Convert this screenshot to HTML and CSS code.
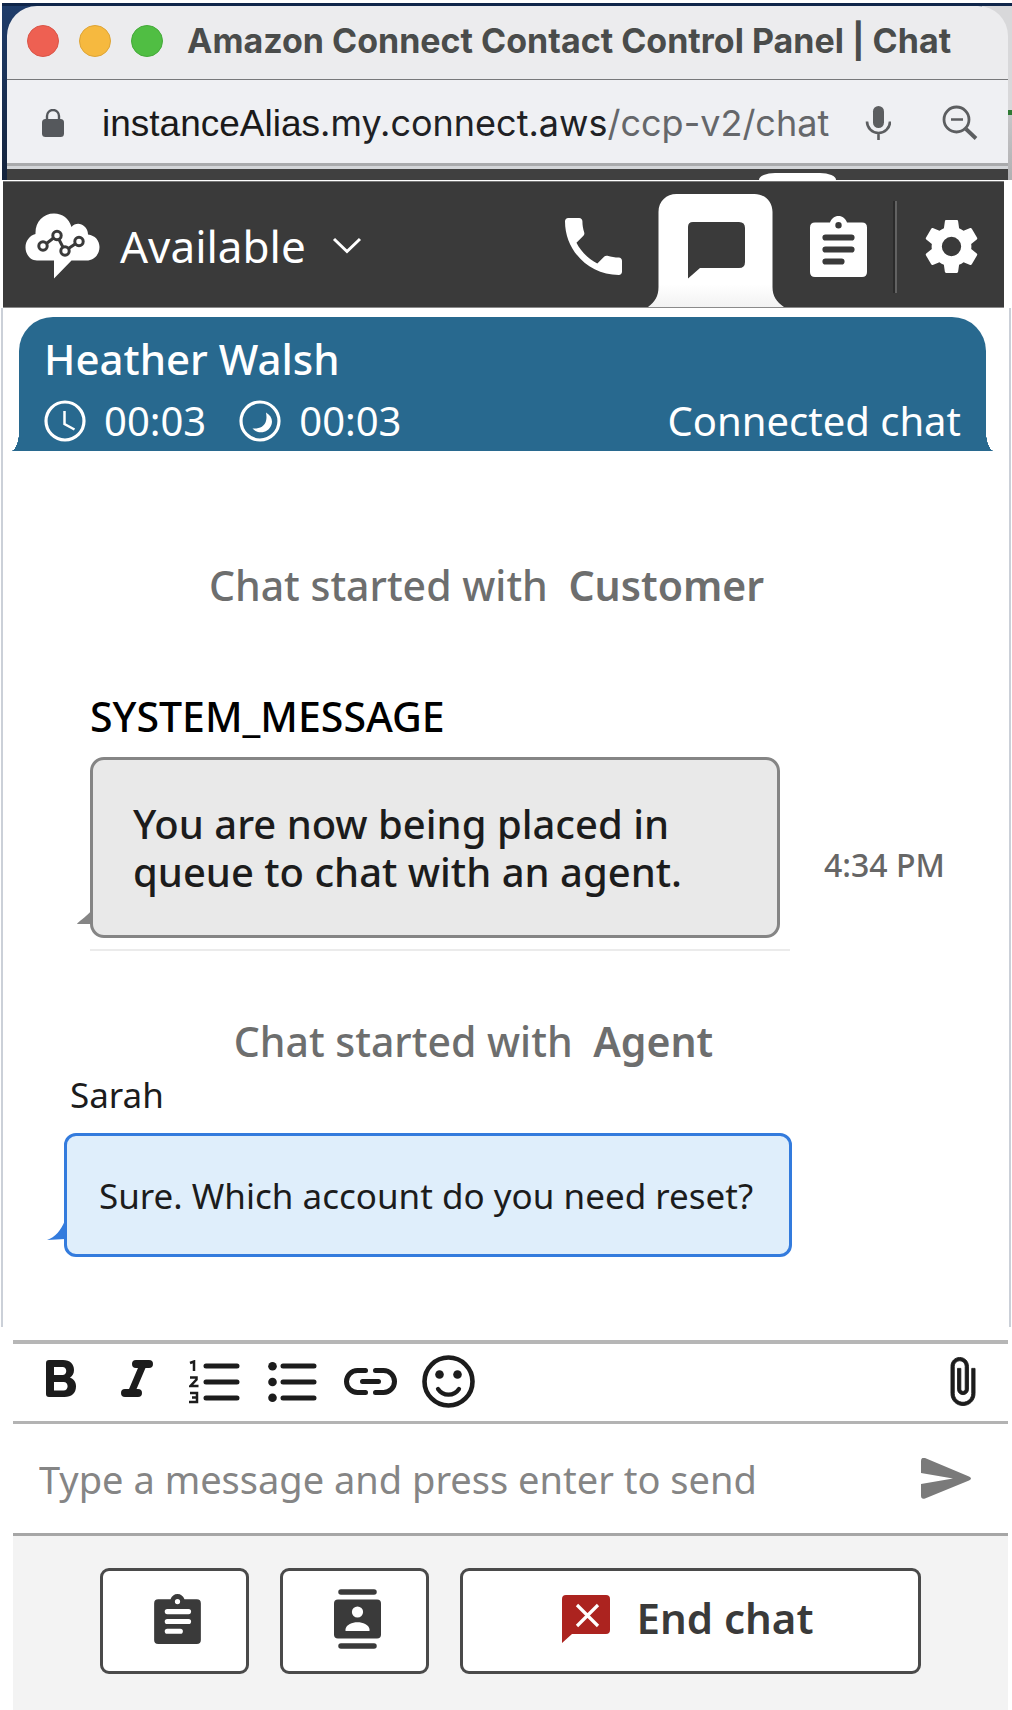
FILE: index.html
```html
<!DOCTYPE html>
<html lang="en">
<head>
<meta charset="utf-8">
<meta name="viewport" content="width=device-width, initial-scale=1">
<title>Amazon Connect Contact Control Panel | Chat</title>
<link rel="stylesheet" href="styles.css">
</head>
<body>
<div class="page">
  <div class="desktop">
    <div class="window">
      <div class="titlebar">
        <div class="lights">
          <span class="light light-close"></span>
          <span class="light light-minimize"></span>
          <span class="light light-zoom"></span>
        </div>
        <h1 class="window-title">Amazon Connect Contact Control Panel | Chat</h1>
      </div>
      <div class="addressbar">
        <svg class="lock" width="22" height="28" viewBox="0 0 22 28"><path d="M5 11V7a6 6 0 0 1 12 0v4" fill="none" stroke="#55585c" stroke-width="2.4"/><rect y="10" width="22" height="18" rx="3.5" fill="#55585c"/></svg>
        <p class="url"><span class="url-alias">instanceAlias</span><span class="url-host">.my.connect.aws</span><span class="url-path">/ccp-v2/chat</span></p>
        <button class="bare" aria-label="Microphone"><svg width="26" height="34" viewBox="0 0 26 34"><rect x="8" y="0" width="11" height="22" rx="5.5" fill="#5c5e60"/><path d="M2 15.500a11.500 11.500 0 0 0 23 0M13.500 27v7" fill="none" stroke="#5c5e60" stroke-width="2.600"/></svg></button>
        <button class="bare" aria-label="Zoom out"><svg width="36" height="36" viewBox="0 0 36 36" fill="none" stroke="#5c5e60"><circle cx="14.500" cy="14.500" r="12.500" stroke-width="2.800"/><path d="M9 14.500h12" stroke-width="2.400"/><path d="M24 24l10 9.500" stroke-width="3.800"/></svg></button>
      </div>
      <div class="behind"><span class="behind-tab"></span></div>
    </div>
  </div>

  <header class="ccp-header">
    <button class="bare status">
      <svg width="75" height="66" viewBox="0 0 75 66"><path fill="#fff" d="M12 47.500C5 47.500.500 41 .500 34.500.500 28 4.500 22.500 10.500 21 10 9 18 .500 29 .500c8.500 0 15 5 17.500 13.500C49 11 53 10 56.500 11.500c4 1.800 6.500 5.500 6.500 10 7 .8 11.500 6 11.500 12.500 0 7.500-5.500 13.500-13 13.500H46.500L29 65.500v-18z"/><g fill="none" stroke="#3a3a3a" stroke-width="3"><circle cx="18" cy="33" r="4.200"/><circle cx="32" cy="22.500" r="4.200"/><circle cx="40" cy="38" r="4.200"/><circle cx="54" cy="28.500" r="4.200"/><path d="M21.500 30.500l7-5.500M34 26.500l4 7.800M43.500 35.500l7-4.800"/></g></svg>
      <span class="status-name">Available</span>
      <svg class="chevron" width="30" height="17" viewBox="0 0 30 17"><path d="M2 2l13 12.500L28 2" fill="none" stroke="#fff" stroke-width="3"/></svg>
    </button>
    <nav class="channels" aria-label="Channels">
      <button class="bare phone" aria-label="Phone"><svg width="57" height="57" viewBox="3 3 18 18" fill="#fff"><path d="M6.620 10.790c1.440 2.830 3.760 5.140 6.590 6.590l2.200-2.200c.27-.27.67-.36 1.020-.24 1.120.37 2.330.57 3.570.57.55 0 1 .45 1 1V20c0 .55-.45 1-1 1-9.390 0-17-7.610-17-17 0-.55.45-1 1-1h3.500c.55 0 1 .45 1 1 0 1.250.2 2.450.57 3.570.11.35.03.74-.25 1.020l-2.200 2.200z"/></svg></button>
      <button class="bare chat-tab" aria-label="Chat">
        <svg width="136" height="113" viewBox="0 0 136 113"><defs><linearGradient id="fade" x1="0" y1="0" x2="0" y2="1"><stop offset=".8" stop-color="#fff"/><stop offset="1" stop-color="#f2f2f2"/></linearGradient></defs><path fill="url(#fade)" d="M0 113C7 108 10.500 102 10.500 93V18c0-11 8-18 18-18h78c10 0 18 7 18 18v75c0 9 4 15 11.500 20z"/><path fill="#3a3a3a" d="M45 28h46q6 0 6 6v34q0 6-6 6H52L40 84.500V33q0-5 5-5z"/></svg>
      </button>
      <button class="bare tasks" aria-label="Tasks"><svg width="57" height="61" viewBox="0 0 57 61"><path fill="#fff" fill-rule="evenodd" d="M5 6.500h15C21.500 2.500 24.500 0 28.500 0S35.500 2.500 37 6.500h15q5 0 5 5V56q0 5-5 5H5q-5 0-5-5V11.500q0-5 5-5zM28.500 6a3.200 3.200 0 1 0 0 6.400 3.200 3.200 0 0 0 0-6.400z"/><path d="M15.500 21.500h26M15.500 33.500h26M15.500 45.500h16" stroke="#3a3a3a" stroke-width="6.200" stroke-linecap="round"/></svg></button>
      <span class="rule"></span>
      <button class="bare gear" aria-label="Settings"><svg width="53" height="53" viewBox="2.400 2.400 19.200 19.200" fill="#fff"><path d="M19.140 12.940c.04-.3.060-.61.060-.94 0-.32-.02-.64-.07-.94l2.030-1.580c.18-.14.23-.41.12-.61l-1.920-3.320c-.12-.22-.37-.29-.59-.22l-2.390.96c-.5-.38-1.030-.7-1.620-.94l-.36-2.540c-.04-.24-.24-.41-.48-.41h-3.840c-.24 0-.43.17-.47.41l-.36 2.540c-.59.24-1.130.57-1.620.94l-2.390-.96c-.22-.08-.47 0-.59.22L2.740 8.870c-.12.21-.08.47.12.61l2.030 1.580c-.05.3-.09.63-.09.94s.02.64.07.94l-2.030 1.580c-.18.14-.23.41-.12.61l1.920 3.320c.12.22.37.29.59.22l2.390-.96c.5.38 1.030.7 1.620.94l.36 2.540c.05.24.24.41.48.41h3.840c.24 0 .44-.17.47-.41l.36-2.540c.59-.24 1.130-.56 1.620-.94l2.390.96c.22.08.47 0 .59-.22l1.920-3.320c.12-.22.07-.47-.12-.61l-2.010-1.580zM12 15.500a3.500 3.500 0 1 1 0-7 3.500 3.500 0 0 1 0 7z"/></svg></button>
    </nav>
  </header>

  <main class="conversation">
    <section class="contact">
      <h2 class="contact-name">Heather Walsh</h2>
      <div class="contact-row">
        <svg width="42" height="42" viewBox="0 0 42 42" fill="none" stroke="#fff"><circle cx="21" cy="21" r="19" stroke-width="3.200"/><path d="M20.500 11v13l10 5.500" stroke-width="2.500"/></svg>
        <time class="timer">00:03</time>
        <svg width="42" height="42" viewBox="0 0 42 42"><circle cx="21" cy="21" r="19" fill="none" stroke="#fff" stroke-width="3.200"/><path fill="#fff" d="M27 12.500c5 3 7 7.500 5.500 12C30 33 19 35 13.500 28.500c7 .5 12-2 13.500-7.500 .8-3 .5-5.500 0-8.500z"/></svg>
        <time class="timer">00:03</time>
        <span class="contact-state">Connected chat</span>
      </div>
    </section>

    <div class="thread">
      <p class="notice">Chat started with <strong>Customer</strong></p>
      <h3 class="sender">SYSTEM_MESSAGE</h3>
      <div class="message">
        <div class="bubble">
          <svg class="tail" width="14" height="14" viewBox="0 0 14 14"><path d="M14 0v13H0C1 11 9 6 14 0z" fill="#858585"/></svg>
          <p>You are now being placed in queue to chat with an agent.</p>
        </div>
        <time class="sent-at">4:34 PM</time>
      </div>
      <div class="underline"></div>
    </div>

    <div class="thread thread-agent">
      <p class="notice">Chat started with <strong>Agent</strong></p>
      <h3 class="sender">Sarah</h3>
      <div class="message">
        <div class="bubble">
          <svg class="tail" width="18" height="20" viewBox="0 0 18 20"><path d="M18 0v19L0 20C8 17 14 11 18 0z" fill="#337bdd"/></svg>
          <p>Sure. Which account do you need reset?</p>
        </div>
      </div>
    </div>
  </main>

  <form class="composer">
    <div class="toolbar">
      <button type="button" class="bare bold" aria-label="Bold"><svg width="30" height="37" viewBox="0 0 30 37"><path fill="#1c1c1c" fill-rule="evenodd" d="M3 0h14c7 0 11 4 11 10 0 3.500-1.500 6-4 7.500 4 1.500 6 5 6 9 0 6.500-4.500 10.500-11.500 10.500H3q-3 0-3-3V3q0-3 3-3zM8 7v8h8.500c5 0 5-8 0-8zM8 22v8.500h9.500c5.500 0 5.500-8.500 0-8.500z"/></svg></button>
      <button type="button" class="bare italic" aria-label="Italic"><svg width="32" height="37" viewBox="0 0 32 37" fill="none" stroke="#1c1c1c" stroke-linecap="round"><path d="M15 4h13M4 33h13" stroke-width="8"/><path d="M22 5L10.500 32" stroke-width="7"/></svg></button>
      <button type="button" class="bare numbers" aria-label="Numbered list"><svg width="51" height="44" viewBox="0 0 51 44" fill="none" stroke="#1c1c1c"><path d="M17 6h31M17 22h31M17 38h31" stroke-width="5" stroke-linecap="round"/><path d="M1 3l4-1.500V11M1 17.500h6.500v2L1.500 26h8M1 33h7v9H0M3 37.500h5" stroke-width="2.500"/></svg></button>
      <button type="button" class="bare bullets" aria-label="Bulleted list"><svg width="50" height="40" viewBox="0 0 50 40"><path d="M15 4h31M15 20h31M15 36h31" stroke="#1c1c1c" stroke-width="5" stroke-linecap="round"/><g fill="#1c1c1c"><circle cx="4.500" cy="4.300" r="4.300"/><circle cx="4.500" cy="20" r="4.300"/><circle cx="4.500" cy="35.700" r="4.300"/></g></svg></button>
      <button type="button" class="bare link" aria-label="Insert link"><svg width="53" height="27" viewBox="0 0 53 27" fill="none" stroke="#1c1c1c" stroke-width="5" stroke-linecap="round"><path d="M21.500 2.500h-8a11 11 0 0 0 0 22h8M31.500 2.500h8a11 11 0 0 1 0 22h-8M18.500 13.500h16"/></svg></button>
      <button type="button" class="bare emoji" aria-label="Emoji"><svg width="53" height="53" viewBox="0 0 53 53"><circle cx="26.500" cy="26.500" r="24" fill="none" stroke="#1c1c1c" stroke-width="4.600"/><circle cx="17.500" cy="19.500" r="4.300" fill="#1c1c1c"/><circle cx="35.500" cy="19.500" r="4.300" fill="#1c1c1c"/><path d="M16 34c5 7.500 16 7.500 21 0" fill="none" stroke="#1c1c1c" stroke-width="4.200" stroke-linecap="round"/></svg></button>
      <button type="button" class="bare attach" aria-label="Attach file"><svg width="26" height="49" viewBox="6.800 .8 11.400 22.400"><path fill="#1c1c1c" stroke="#1c1c1c" stroke-width=".4" d="M16.500 6v11.500c0 2.210-1.790 4-4 4s-4-1.790-4-4V5c0-1.380 1.120-2.500 2.500-2.500s2.500 1.120 2.500 2.500v10.500c0 .55-.45 1-1 1s-1-.45-1-1V6H10v9.500c0 1.380 1.120 2.500 2.500 2.500s2.500-1.120 2.500-2.500V5c0-2.210-1.790-4-4-4S7 2.790 7 5v12.500c0 3.040 2.460 5.500 5.500 5.500s5.500-2.460 5.500-5.500V6h-1.500z"/></svg></button>
    </div>
    <div class="entry">
      <input class="entry-text" type="text" aria-label="Message" placeholder="Type a message and press enter to send">
      <button type="button" class="bare" aria-label="Send"><svg width="51" height="41" viewBox="0 0 51 41"><path fill="#7a7a7a" d="M1 3q0-4 4-3L49 18.500q4 2 0 4L5 40.500q-4 1-4-3V26l32-5.500L1 15z"/></svg></button>
    </div>
    <div class="actions">
      <button type="button" class="action" aria-label="Create task"><svg width="47" height="50" viewBox="0 0 57 61"><path fill="#3a3a3a" fill-rule="evenodd" d="M5 6.500h15C21.500 2.500 24.500 0 28.500 0S35.500 2.500 37 6.500h15q5 0 5 5V56q0 5-5 5H5q-5 0-5-5V11.500q0-5 5-5zM28.500 6a3.200 3.200 0 1 0 0 6.400 3.200 3.200 0 0 0 0-6.400z"/><path d="M16 21.500h26M16 33.500h26M16 45.500h16" stroke="#fff" stroke-width="6.200" stroke-linecap="round"/></svg></button>
      <button type="button" class="action" aria-label="Quick connects"><svg width="47" height="60" viewBox="0 0 47 60"><path d="M7 3h33M7 57h33" stroke="#3a3a3a" stroke-width="5.500" stroke-linecap="round"/><rect y="10.500" width="47" height="39" rx="4" fill="#3a3a3a"/><circle cx="23.500" cy="23" r="5.600" fill="#fff"/><path d="M11.500 42v-2c2-9 22-9 24 0v2z" fill="#fff"/></svg></button>
      <button type="button" class="action action-end"><svg width="48" height="48" viewBox="0 0 48 48"><path fill="#ac231f" d="M4 0h40q4 0 4 4v31q0 4-4 4H10L0 48V4q0-4 4-4z"/><path d="M15 10l21 21M36 10L15 31" stroke="#fff" stroke-width="3.200"/></svg><span class="action-label">End chat</span></button>
    </div>
  </form>
</div>
</body>
</html>
```
FILE: styles.css
```css
* { box-sizing: border-box; }

body {
  margin: 0;
  background: #fff;
  color: #1c1c1c;
  font-family: "Noto Sans", "Open Sans", sans-serif;
}

h1, h2, h3, p { margin: 0; }
svg { display: block; flex: none; }

button, input { font: inherit; color: inherit; }
.bare { padding: 0; border: 0; background: none; }

.page {
  display: flex;
  flex-direction: column;
  min-height: 100vh;
  padding-top: 3px;
}

/* Browser window chrome over the desktop */
.desktop {
  margin-left: 2px;
  padding: 3px 4px 0 5px;
  background:
    linear-gradient(#10264a, #10264a) top / 100% 3px no-repeat,
    linear-gradient(#d8d8da 107px, #2f7a35 107px, #2f7a35 112px, #c6c6c8 112px, #b0b0b2) right / 30px 100% no-repeat,
    linear-gradient(#1f3d6b, #14233c);
}

.window {
  overflow: hidden;
  border-radius: 30px 30px 0 0;
  background: #ececee;
}

.titlebar {
  display: flex;
  align-items: center;
  gap: 24px;
  height: 74px;
  padding: 0 20px 3px;
  border-bottom: 1px solid #77787a;
}

.lights { display: flex; gap: 20px; }
.light { width: 32px; height: 32px; border: 1px solid; border-radius: 50%; }
.light-close { background: #ee6052; border-color: #d95548; }
.light-minimize { background: #f6b93f; border-color: #dda436; }
.light-zoom { background: #50be43; border-color: #45aa3a; }

.window-title {
  color: #4a4c4b;
  font: 700 34px/40px Inter, sans-serif;
  white-space: nowrap;
}

.addressbar {
  display: flex;
  align-items: center;
  height: 86px;
  padding: 3px 30px 0 35px;
  border-bottom: 3px solid #a9aaac;
  background: #eff0f3;
}

.url {
  flex: 1;
  margin-left: 38px;
  color: #202124;
  font: 36px/44px Inter, sans-serif;
  white-space: nowrap;
}
.url-alias { color: #1a1a1a; font: 37px/44px "Liberation Sans", sans-serif; }
.url-path { color: #65676a; }
.addressbar .bare + .bare { margin-left: 51px; }

.behind {
  display: flex;
  justify-content: flex-end;
  align-items: flex-end;
  height: 14px;
  padding-right: 172px;
  border-top: 3px solid #d3d5d8;
  background: #404040;
}
.behind-tab {
  width: 77px;
  height: 7px;
  border-radius: 16px 16px 0 0 / 7px 7px 0 0;
  background: #fff;
}

/* Header: agent status and channel tabs */
.ccp-header {
  display: flex;
  justify-content: space-between;
  height: 127px;
  margin: 1px 8px 0 3px;
  border-top: 1px solid #777;
  border-bottom: 1px solid #8a8a8a;
  background: #3a3a3a;
}

.status {
  display: flex;
  align-items: center;
  padding: 2px 0 0 22px;
  color: #fff;
}
.status-name { margin-left: 20px; font-size: 44px; line-height: 56px; }
.chevron { margin-left: 26px; }

.channels { display: flex; align-items: center; padding-top: 4px; }
.chat-tab { align-self: flex-end; margin-left: 26px; }
.tasks { margin-left: 26px; }
.rule {
  width: 4px;
  height: 92px;
  margin: 0 28px 0 26px;
  border-left: 2px solid #2b2b2b;
  border-right: 2px solid #626262;
}
.gear { margin-right: 26px; }

/* Conversation */
.conversation {
  flex: 1;
  margin: 0 1px;
  padding-bottom: 68px;
  border: solid #cbd0d8;
  border-width: 0 2px;
}

.contact {
  position: relative;
  margin: 9px 23px 0 16px;
  height: 134px;
  padding: 14px 25px 0;
  border-radius: 34px 34px 0 0;
  background: #28698f;
  color: #fff;
}
/* Flared feet of the contact card */
.contact::before,
.contact::after {
  content: "";
  position: absolute;
  bottom: 0;
  width: 8px;
  height: 20px;
}
.contact::before {
  right: 100%;
  background: radial-gradient(ellipse 8px 20px at 0 0, transparent 98%, #28698f);
}
.contact::after {
  left: 100%;
  background: radial-gradient(ellipse 8px 20px at 100% 0, transparent 98%, #28698f);
}

.contact-name { font-size: 42px; line-height: 56px; font-weight: 500; }
.contact-row { display: flex; align-items: center; height: 56px; margin-top: 6px; }
.timer { margin: 0 33px 0 18px; font-size: 40px; line-height: 56px; }
.contact-state { margin-left: auto; font-size: 40px; line-height: 56px; }

.thread { padding: 106px 40px 0 87px; }
.notice {
  padding-right: 86px;
  color: #6d6e6e;
  font-size: 41px;
  line-height: 56px;
  font-weight: 500;
  text-align: center;
}
.notice strong { margin-left: 10px; font-weight: 600; }
.sender { margin-top: 77px; color: #000; font-size: 41px; line-height: 52px; font-weight: 500; }

.message { display: flex; align-items: center; gap: 44px; margin-top: 15px; }
.bubble {
  position: relative;
  width: 690px;
  padding: 40px 40px 39px;
  border: 3px solid #858585;
  border-radius: 14px;
  background: #e9e9e9;
  font-size: 40px;
  line-height: 48px;
  font-weight: 500;
}
.tail { position: absolute; right: 100%; bottom: 10px; margin-right: 2px; }
.sent-at { padding-top: 34px; color: #666; font-size: 32px; line-height: 40px; font-weight: 500; }
.underline { width: 700px; height: 2px; margin-top: 11px; background: #ebebeb; }

.thread-agent { padding: 62px 40px 0 61px; }
.thread-agent .sender { margin: 0 6px; color: #1c1c1c; font-size: 35px; font-weight: 400; }
.thread-agent .message { margin-top: 12px; }
.thread-agent .bubble {
  width: 728px;
  padding: 36px 32px 34px;
  border-color: #337bdd;
  border-radius: 12px;
  background: #dfeefb;
  font-size: 35px;
  font-weight: 400;
}
.thread-agent .tail { bottom: 14px; }

/* Composer */
.composer { margin: 13px 4px 0 13px; border-top: 4px solid #b6b6b6; }

.toolbar {
  display: flex;
  align-items: center;
  height: 80px;
  padding: 0 32px 2px 33px;
  border-bottom: 3px solid #b3b3b3;
}
.bold, .italic { padding-bottom: 6px; }
.italic { margin-left: 45px; }
.numbers { margin-left: 36px; }
.bullets { margin-left: 28px; }
.link { margin-left: 26px; }
.emoji { margin-left: 25px; }
.attach { margin-left: auto; }

.entry {
  display: flex;
  align-items: center;
  height: 112px;
  padding: 0 37px 0 26px;
  border-bottom: 3px solid #a6a6a6;
}
.entry-text {
  flex: 1;
  min-width: 0;
  height: 60px;
  padding: 0;
  border: 0;
  outline: 0;
  background: none;
  font-size: 38px;
}
.entry-text::placeholder { color: #858585; opacity: 1; }

.actions {
  display: flex;
  gap: 31px;
  padding: 32px 87px 36px;
  background: #f3f3f3;
}
.action {
  display: flex;
  align-items: center;
  justify-content: center;
  gap: 27px;
  width: 149px;
  height: 106px;
  padding: 0 0 5px 6px;
  border: 3px solid #4a4a4a;
  border-radius: 9px;
  background: #fff;
  color: #3a3a3a;
  font-size: 42px;
  font-weight: 600;
}
.action-end { flex: 1; padding: 0 6px 4px 0; }
.action-label { padding-bottom: 4px; }
```
